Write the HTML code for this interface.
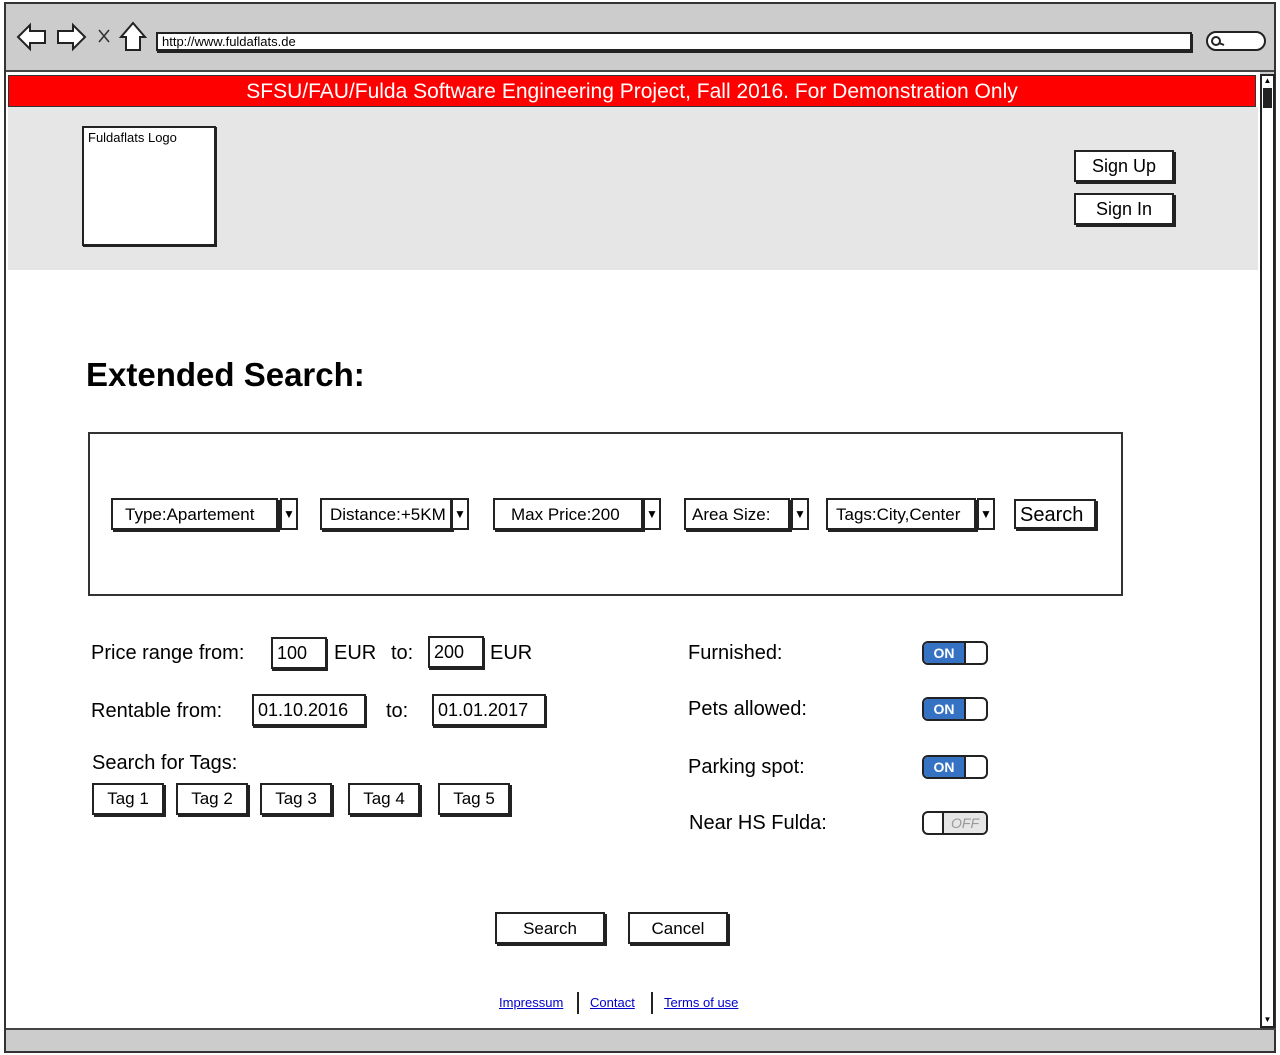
<!DOCTYPE html>
<html><head><meta charset="utf-8"><style>
*{box-sizing:border-box;margin:0;padding:0}
body{width:1280px;height:1055px;position:relative;background:#fff;font-family:"Comic Sans MS","Liberation Sans",sans-serif;overflow:hidden;color:#000}
.a{position:absolute}
.bx{position:absolute;border:2px solid #222;background:#fff;box-shadow:2px 2px 0 #222}
.t{position:absolute;white-space:nowrap}
.dd{position:absolute;height:32px;border:2px solid #222;background:#fff;font-size:17px;line-height:30px;padding-left:12px;box-shadow:2px 2px 0 #222}
.ar{position:absolute;width:18px;height:32px;border:2px solid #222;background:#fff;font-size:12px;text-align:center;line-height:28px}
.in{position:absolute;height:32px;border:2px solid #222;background:#fff;font-size:18px;line-height:28px;padding-left:4px;box-shadow:1px 2px 0 #222}
.tg{position:absolute;top:783px;height:32px;border:2px solid #222;background:#fff;font-size:17px;line-height:28px;text-align:center;box-shadow:2px 2px 0 #222}
.lb{position:absolute;font-size:20px;white-space:nowrap}
.sw{position:absolute;left:922px;width:66px;height:24px;border:2px solid #222;border-radius:6px;overflow:hidden;background:#fff}
.sw .on{position:absolute;left:0;top:0;width:42px;height:20px;background:#3572c4;color:#fff;font-size:14px;font-weight:bold;text-align:center;line-height:20px;border-right:2px solid #222}
.sw .off{position:absolute;right:0;top:0;width:44px;height:20px;background:#e6e6e6;color:#999;font-size:14px;text-align:center;line-height:20px;border-left:2px solid #222;font-style:italic}
.lk{color:#00c;text-decoration:underline;font-size:13px}
</style></head><body>
<div class="a" style="left:4px;top:2px;width:1272px;height:1051px;border:2px solid #333;background:#ccc"></div>
<div class="a" style="left:6px;top:70px;width:1268px;height:2px;background:#444"></div>
<svg class="a" style="left:14px;top:20px" width="140" height="34" viewBox="0 0 140 34">
<path d="M4 17 L16 5 L16 11 L31 11 L31 23 L16 23 L16 29 Z" fill="#fff" stroke="#222" stroke-width="2"/>
<path d="M71 17 L59 5 L59 11 L44 11 L44 23 L59 23 L59 29 Z" fill="#fff" stroke="#222" stroke-width="2"/>
<path d="M85 10 L95 22 M95 10 L85 22" stroke="#333" stroke-width="1.6"/>
<path d="M119 3 L107 17 L112 17 L112 30 L126 30 L126 17 L131 17 Z" fill="#fff" stroke="#222" stroke-width="2"/>
</svg>
<div class="a" style="left:156px;top:32px;width:1036px;height:19px;border:2px solid #222;background:#fff;font-size:13px;line-height:16px;padding-left:4px;box-shadow:1px 2px 0 #222">http://www.fuldaflats.de</div>
<div class="a" style="left:1206px;top:31px;width:60px;height:20px;border:2px solid #222;border-radius:10px;background:#fff"></div>
<svg class="a" style="left:1210px;top:34px" width="16" height="14"><circle cx="6" cy="7" r="4" fill="none" stroke="#222" stroke-width="2"/><path d="M9 9 L14 11" stroke="#222" stroke-width="2"/></svg>
<div class="a" style="left:6px;top:72px;width:1254px;height:956px;background:#fff"></div>
<div class="a" style="left:8px;top:75px;width:1248px;height:32px;background:#f00;border:1px solid #333;color:#fff;font-size:21px;text-align:center;line-height:31px">SFSU/FAU/Fulda Software Engineering Project, Fall 2016. For Demonstration Only</div>
<div class="a" style="left:8px;top:107px;width:1250px;height:163px;background:#e6e6e6"></div>
<div class="bx" style="left:82px;top:126px;width:134px;height:120px;box-shadow:1px 1px 0 #222"><span class="t" style="left:4px;top:2px;font-size:13px">Fuldaflats Logo</span></div>
<div class="bx" style="left:1074px;top:150px;width:100px;height:32px;font-size:18px;text-align:center;line-height:29px">Sign Up</div>
<div class="bx" style="left:1074px;top:193px;width:100px;height:32px;font-size:18px;text-align:center;line-height:29px">Sign In</div>
<div class="a" style="left:1260px;top:74px;width:15px;height:954px;border:2px solid #222;background:#fff"></div>
<div class="a" style="left:1263px;top:88px;width:9px;height:20px;background:#222"></div>
<div class="a" style="left:1262px;top:76px;width:11px;height:10px;font-size:8px;text-align:center">▲</div>
<div class="a" style="left:1262px;top:1015px;width:11px;height:10px;font-size:8px;text-align:center">▼</div>
<div class="a" style="left:6px;top:1028px;width:1270px;height:2px;background:#444"></div>
<div class="t" style="left:86px;top:356px;font-size:33px;font-weight:bold">Extended Search:</div>
<div class="a" style="left:88px;top:432px;width:1035px;height:164px;border:2px solid #333"></div>
<div class="dd" style="left:111px;top:498px;width:167px">Type:Apartement</div><div class="ar" style="left:280px;top:498px">▼</div>
<div class="dd" style="left:320px;top:498px;width:132px;padding-left:8px">Distance:+5KM</div><div class="ar" style="left:451px;top:498px">▼</div>
<div class="dd" style="left:493px;top:498px;width:150px;padding-left:16px">Max Price:200</div><div class="ar" style="left:643px;top:498px">▼</div>
<div class="dd" style="left:684px;top:498px;width:106px;padding-left:6px">Area Size:</div><div class="ar" style="left:791px;top:498px">▼</div>
<div class="dd" style="left:826px;top:498px;width:150px;padding-left:8px">Tags:City,Center</div><div class="ar" style="left:977px;top:498px">▼</div>
<div class="bx" style="left:1014px;top:499px;width:82px;height:30px;font-size:20px;line-height:28px;padding-left:4px">Search</div>
<div class="lb" style="left:91px;top:642px">Price range from:</div>
<div class="in" style="left:271px;top:637px;width:56px">100</div>
<div class="lb" style="left:334px;top:642px">EUR</div>
<div class="lb" style="left:391px;top:642px">to:</div>
<div class="in" style="left:428px;top:636px;width:56px">200</div>
<div class="lb" style="left:490px;top:642px">EUR</div>
<div class="lb" style="left:91px;top:700px">Rentable from:</div>
<div class="in" style="left:252px;top:694px;width:114px">01.10.2016</div>
<div class="lb" style="left:386px;top:700px">to:</div>
<div class="in" style="left:432px;top:694px;width:114px">01.01.2017</div>
<div class="lb" style="left:92px;top:752px">Search for Tags:</div>
<div class="tg" style="left:92px;width:72px">Tag 1</div>
<div class="tg" style="left:176px;width:72px">Tag 2</div>
<div class="tg" style="left:260px;width:72px">Tag 3</div>
<div class="tg" style="left:348px;width:72px">Tag 4</div>
<div class="tg" style="left:438px;width:72px">Tag 5</div>
<div class="lb" style="left:688px;top:642px">Furnished:</div>
<div class="lb" style="left:688px;top:698px">Pets allowed:</div>
<div class="lb" style="left:688px;top:756px">Parking spot:</div>
<div class="lb" style="left:689px;top:812px">Near HS Fulda:</div>
<div class="sw" style="top:641px"><div class="on">ON</div></div>
<div class="sw" style="top:697px"><div class="on">ON</div></div>
<div class="sw" style="top:755px"><div class="on">ON</div></div>
<div class="sw" style="top:811px"><div class="off">OFF</div></div>
<div class="bx" style="left:495px;top:912px;width:110px;height:32px;font-size:17px;text-align:center;line-height:29px">Search</div>
<div class="bx" style="left:628px;top:912px;width:100px;height:32px;font-size:17px;text-align:center;line-height:29px">Cancel</div>
<div class="t" style="left:499px;top:994px"><span class="lk">Impressum</span></div>
<div class="a" style="left:577px;top:992px;width:2px;height:22px;background:#222"></div>
<div class="t" style="left:590px;top:994px"><span class="lk">Contact</span></div>
<div class="a" style="left:651px;top:992px;width:2px;height:22px;background:#222"></div>
<div class="t" style="left:664px;top:994px"><span class="lk">Terms of use</span></div>
</body></html>
